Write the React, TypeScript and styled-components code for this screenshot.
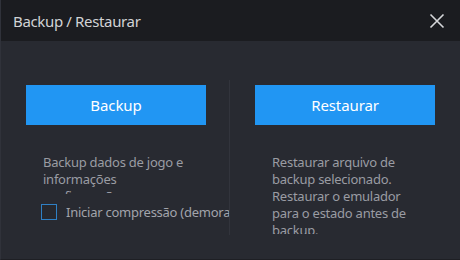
import React from 'react';
import styled, { createGlobalStyle } from 'styled-components';

const GlobalStyle = createGlobalStyle`
  html, body {
    margin: 0;
    padding: 0;
    background: #282a31;
  }
  * {
    box-sizing: border-box;
  }
`;

const Window = styled.div`
  width: 460px;
  height: 260px;
  display: flex;
  flex-direction: column;
  background-color: #282a31;
  border-left: 1px solid #30323a;
  border-bottom: 1px solid #1e1f24;
  font-family: 'Noto Sans', 'Liberation Sans', sans-serif;
  overflow: hidden;
`;

const TitleBar = styled.div`
  height: 41px;
  flex: none;
  display: flex;
  align-items: center;
  justify-content: space-between;
  padding: 0 14px 0 12px;
  background-color: #1b1c20;
`;

const Title = styled.span`
  font-size: 15px;
  letter-spacing: -0.35px;
  color: #d2d3d6;
`;

const CloseButton = styled.button`
  width: 18px;
  height: 18px;
  padding: 0;
  display: flex;
  align-items: center;
  justify-content: center;
  background: transparent;
  border: none;
  cursor: pointer;
`;

const Body = styled.div`
  flex: 1;
  display: flex;
  padding: 44px 0 0 25px;
`;

const Column = styled.div`
  width: 203px;
  display: flex;
  flex-direction: column;
  overflow: hidden;
`;

const Divider = styled.div`
  width: 1px;
  height: 155px;
  margin-top: -5px;
  flex: none;
  background-color: #32343c;
`;

const RightColumn = styled(Column)`
  margin-left: 25px;
  width: 182px;
`;

const ActionButton = styled.button`
  width: 180px;
  height: 40px;
  flex: none;
  padding: 0;
  font-family: inherit;
  font-size: 15px;
  letter-spacing: -0.1px;
  color: #ffffff;
  background-color: #2196f3;
  border: none;
  cursor: pointer;
`;

const Description = styled.p<{ $height: number }>`
  width: 146px;
  height: ${(p) => p.$height}px;
  margin: 29px 0 0 17px;
  overflow: hidden;
  font-size: 13px;
  line-height: 17px;
  letter-spacing: -0.25px;
  color: #9a9ca3;
`;

const CheckRow = styled.label`
  display: flex;
  align-items: center;
  gap: 9px;
  margin: 9px 0 0 15px;
  white-space: nowrap;
  font-size: 13px;
  letter-spacing: -0.25px;
  color: #a2a4ab;
  cursor: pointer;
`;

const CheckBox = styled.span`
  width: 16px;
  height: 16px;
  flex: none;
  border: 1px solid #2f80c4;
  background-color: #26282e;
`;

const App = (): JSX.Element => {
  return (
    <>
      <GlobalStyle />
      <Window>
        <TitleBar>
          <Title>Backup / Restaurar</Title>
          <CloseButton>
            <svg width="16" height="16" viewBox="0 0 16 16">
              <path d="M1.5 1.5 L14.5 14.5 M14.5 1.5 L1.5 14.5" stroke="#d6d7da" strokeWidth="1.6" fill="none" />
            </svg>
          </CloseButton>
        </TitleBar>

        <Body>
          <Column>
            <ActionButton>Backup</ActionButton>
            <Description $height={40}>
              Backup dados de jogo e informações configurações
            </Description>
            <CheckRow>
              <CheckBox />
              Iniciar compressão (demora mais tempo)
            </CheckRow>
          </Column>

          <Divider />

          <RightColumn>
            <ActionButton>Restaurar</ActionButton>
            <Description $height={80}>
              Restaurar arquivo de backup selecionado. Restaurar o emulador para o estado antes de backup.
            </Description>
          </RightColumn>
        </Body>
      </Window>
    </>
  );
};

export default App;
